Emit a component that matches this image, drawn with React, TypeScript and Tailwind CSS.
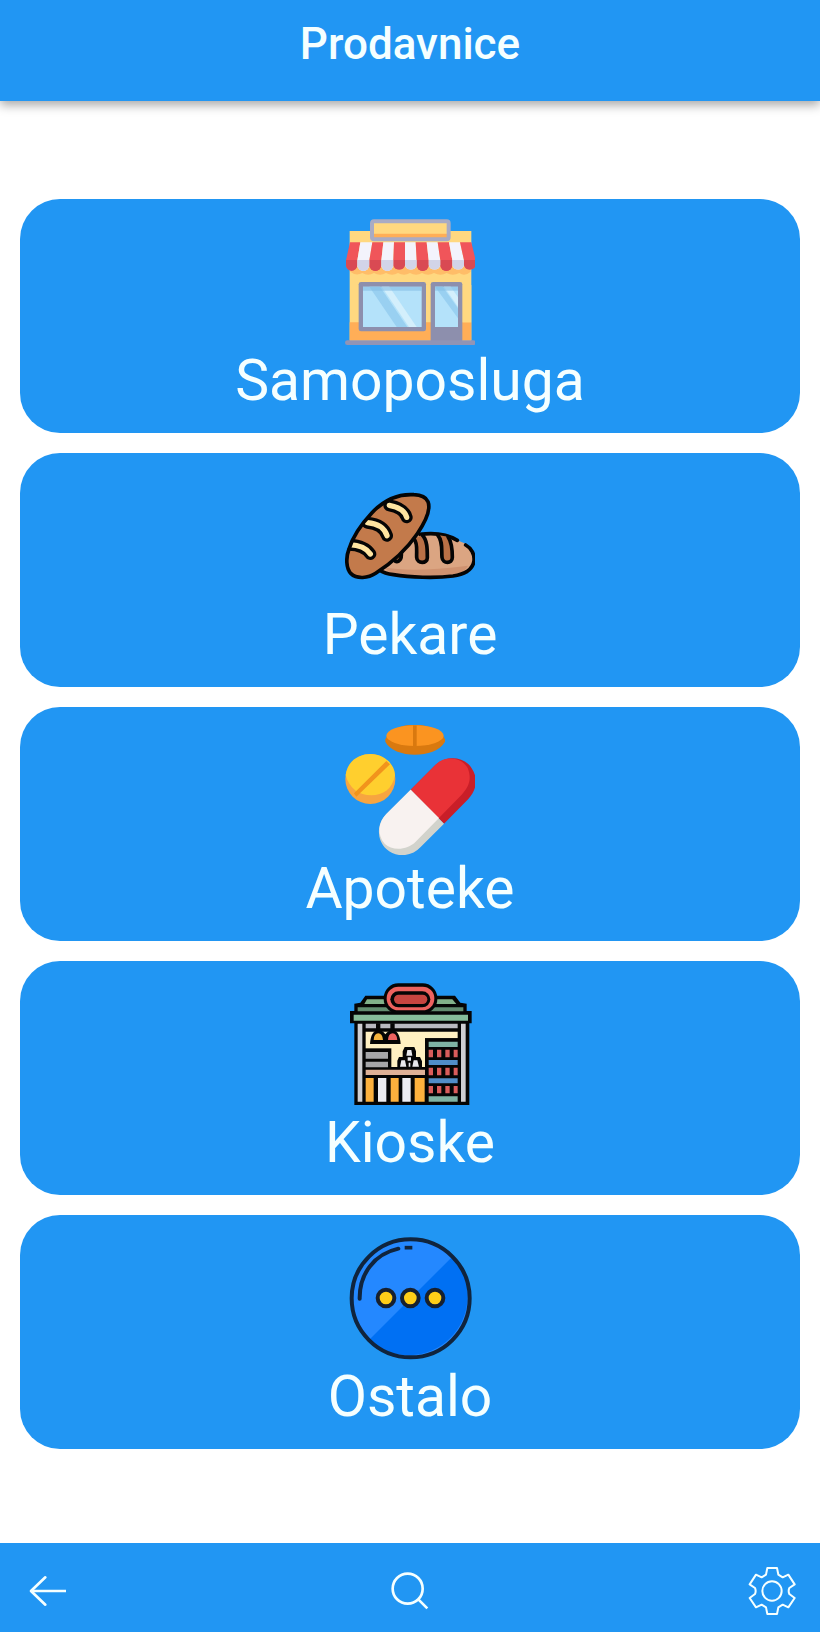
import type { ReactNode } from 'react';

const StoreIcon = () => (
  <svg viewBox="45 36 390 390" className="size-[130px]" aria-hidden="true">
    <rect x="59" y="78" width="365" height="330" fill="#ffd880" />
    <path d="M59 352H424V406H59z" fill="#ffae57" />
    <path d="M397 240H424V352H397z" fill="#ffd880" />
    <rect x="126" y="49" width="230" height="54" rx="6" fill="#ffd880" />
    <path d="M130 86H352V100H130z" fill="#ffae57" />
    <rect x="126" y="49" width="230" height="54" rx="6" fill="none" stroke="#a9abc4" strokeWidth="12" />
    {/* shade under the awning */}
    <path d="M61 185H422V200Q404 216 388 204Q368 214 350 204Q332 214 312 204Q294 214 276 204Q258 214 240 204Q222 214 204 204Q186 214 168 204Q150 214 132 204Q114 214 97 204Q78 214 61 200z" fill="#ffbd68" />
    <path d="M60 112H91L82 166V180A17 17 0 0 1 48 180V166z" fill="#f0555a" />
    <path d="M91 112H127L118 166V180A18 18 0 0 1 82 180V166z" fill="#f3f3fc" />
    <path d="M127 112H160L154 166V180A18 18 0 0 1 118 180V166z" fill="#f0555a" />
    <path d="M160 112H192L190 166V180A18 18 0 0 1 154 180V166z" fill="#f3f3fc" />
    <path d="M192 112H225V180A18 18 0 0 1 190 180V166z" fill="#f0555a" />
    <path d="M225 112H257L260 166V180A18 18 0 0 1 225 180z" fill="#f3f3fc" />
    <path d="M257 112H290L296 166V180A18 18 0 0 1 260 180V166z" fill="#f0555a" />
    <path d="M290 112H323L331 166V180A18 18 0 0 1 296 180V166z" fill="#f3f3fc" />
    <path d="M323 112H357L367 166V180A18 18 0 0 1 331 180V166z" fill="#f0555a" />
    <path d="M357 112H390L402 166V180A18 18 0 0 1 367 180V166z" fill="#f3f3fc" />
    <path d="M390 112H424L437 166V180A18 18 0 0 1 402 180V166z" fill="#f0555a" />
    <g fill="#d94a53">
      <path d="M48 165H82V180A17 17 0 0 1 48 180z" />
      <path d="M118 165H154V180A18 18 0 0 1 118 180z" />
      <path d="M190 165H225V180A18 18 0 0 1 190 180z" />
      <path d="M260 165H296V180A18 18 0 0 1 260 180z" />
      <path d="M331 165H367V180A18 18 0 0 1 331 180z" />
      <path d="M402 165H437V180A18 18 0 0 1 402 180z" />
    </g>
    <g fill="#d2d4e8">
      <path d="M82 165H118V180A18 18 0 0 1 82 180z" />
      <path d="M154 165H190V180A18 18 0 0 1 154 180z" />
      <path d="M225 165H260V180A18 18 0 0 1 225 180z" />
      <path d="M296 165H331V180A18 18 0 0 1 296 180z" />
      <path d="M367 165H402V180A18 18 0 0 1 367 180z" />
    </g>
    <rect x="86" y="231" width="202" height="148" rx="7" fill="#8d8fad" />
    <rect x="99" y="245" width="176" height="121" fill="#b4e2fa" />
    <path d="M118 245H150L232 366H200z" fill="#99d0f1" />
    <path d="M155 245H178L260 366H237z" fill="#d3effc" />
    <path d="M99 245H275V257H99z" fill="#83bce4" opacity="0.6" />
    <path d="M302 408V238Q302 231 309 231H390Q397 231 397 238V408z" fill="#8d8fad" />
    <rect x="315" y="245" width="69" height="121" fill="#b4e2fa" />
    <path d="M315 245H338L384 310V340z" fill="#99d0f1" />
    <path d="M342 245H362L384 277V305z" fill="#d3effc" />
    <path d="M315 245H384V257H315z" fill="#83bce4" opacity="0.6" />
    <rect x="45" y="406" width="392" height="14" rx="7" fill="#9194b5" />
  </svg>
);

const loafShape =
  'M126 98C159 63 204 41 252 44Q285 45 294 65C304 91 285 127 262 161C230 208 186 248 137 280C115 295 80 298 63 281C48 265 47 233 57 207C68 170 96 130 126 98z';
const loafCuts = 'M178 76Q222 84 230 112M112 128Q160 132 171 167M58 194Q104 196 121 222';

const BreadIcon = () => (
  <svg viewBox="45 -27 390 390" className="size-[130px]" aria-hidden="true">
    <clipPath id="loaf">
      <path d={loafShape} />
    </clipPath>
    <g stroke="#050505" strokeWidth="11" strokeLinecap="round" strokeLinejoin="round">
      <path d="M270 163C310 157 351 162 382 181L407 191C424 204 434 224 432 242C429 266 408 282 369 288C315 295 240 292 190 284Q164 281 148 270L213 190z" fill="#dba582" stroke="none" />
      <path d="M160 262Q250 278 414 257Q404 281 365 286C310 293 220 291 185 281z" fill="#cf9270" stroke="none" />
      <path d="M270 163C315 157 351 162 382 181M407 195C424 204 434 224 432 242C429 266 408 282 369 288C315 295 240 292 190 284Q164 281 148 270" fill="none" />
      <path d="M252 177C264 190 259 212 260 232C261 252 292 252 292 233C292 207 292 180 276 164" fill="#b97046" />
      <path d="M323 165C339 184 334 210 336 232C338 252 367 252 367 232C367 207 365 186 354 170" fill="#b97046" />
      <path d="M190 237C200 252 214 242 214 226V214" fill="#b97046" />
      <path d={loafShape} fill="#c37a4b" stroke="none" />
      <g clipPath="url(#loaf)" fill="none">
        <path d={loafCuts} strokeWidth="36" />
        <path d={loafCuts} stroke="#ffe5a1" strokeWidth="16" />
      </g>
      <path d={loafShape} fill="none" />
    </g>
  </svg>
);

const PillsIcon = () => (
  <svg viewBox="45 30 390 390" className="size-[130px]" aria-hidden="true">
    <path d="M166 73C178 42 217 29 255 29C295 29 334 45 345 73V80C329 108 291 119 255 119C216 119 178 105 166 80z" fill="#d9790f" />
    <ellipse cx="255" cy="62" rx="86" ry="31" fill="#fb9420" />
    <path d="M249 31H260V93H249z" fill="#d9790f" />
    <circle cx="121" cy="192" r="75" fill="#f7a540" />
    <path d="M47 180C52 138 86 117 122 117C160 117 194 145 195 181C187 224 159 240 124 241C87 241 57 220 47 180z" fill="#ffcf2e" />
    <path d="M72 235L169 138L180 148L79 245Q75 241 72 235z" fill="#f2941c" />
    <path d="M242 224L316 150C348 120 402 124 424 158C447 192 439 225 415 252L342 326z" fill="#c91e28" />
    <path d="M242 224L316 150C343 121 394 125 413 159C427 193 415 217 395 239L326 310z" fill="#e93237" />
    <path d="M242 224L342 326L272 396C246 425 198 430 169 402C139 374 140 327 168 298z" fill="#d2d3cc" />
    <path d="M242 224L327 309L257 380C231 406 187 408 164 386C140 359 145 321 169 297z" fill="#f8f2f0" />
  </svg>
);

const KioskIcon = () => (
  <svg viewBox="30 27 390 390" className="size-[130px]" aria-hidden="true">
    <path d="M58 155H403V405H58z" fill="#050505" />
    <path d="M91 77H360L376 98L395 101V123H410V160H45V123H58V101L76 98z" fill="#050505" />
    <path d="M96 88H352L364 102H88z" fill="#82b18a" />
    <path d="M68 112H385V124H68z" fill="#638d70" />
    <path d="M56 134H399V152H56z" fill="#86bd9a" />
    <rect x="146" y="40" width="161" height="91" rx="44" fill="#050505" />
    <rect x="155" y="50" width="143" height="71" rx="35" fill="#ed625f" />
    <rect x="166" y="64" width="120" height="48" rx="24" fill="#050505" />
    <rect x="177" y="74" width="100" height="28" rx="14" fill="#c84540" />
    <path d="M68 161H82V395H68zM378 161H392V395H378z" fill="#cfcfd2" />
    <path d="M92 161H368V175H92z" fill="#b9b9c0" />
    <path d="M92 185H368V205H270V291H92z" fill="#fff0c2" />
    <path d="M123 160H136V186H123zM166 160H179V186H166z" fill="#050505" />
    <path d="M105 222Q108 181 130 181Q143 181 151 193Q160 181 172 181Q194 182 197 222z" fill="#050505" />
    <path d="M116 210Q117 190 130 190Q142 190 144 210z" fill="#f5b43d" />
    <path d="M159 210Q160 190 173 190Q185 190 187 210z" fill="#ed625f" />
    <path d="M89 235H169V293H89z" fill="#050505" />
    <path d="M92 246H159V266H92zM92 275H159V292H92z" fill="#a6a6a8" />
    <path d="M187 292V272L192 261H203V244L209 231H238L243 244V261H255L261 274V292z" fill="#050505" />
    <path d="M217 240H229L232 257H214zM199 271H210L214 290H195zM236 271H247L252 290H232zM218 262H228V272H218zM221 278H226V290H221z" fill="#e8e8ed" />
    <path d="M92 299H270V315H92z" fill="#dfb196" />
    <path d="M92 324H116V395H92zM167 324H191V395H167zM239 324H269V395H239z" fill="#fdb13d" />
    <path d="M129 324H154V395H129zM202 324H227V395H202z" fill="#ededf2" />
    <path d="M270 205H369V400H270z" fill="#050505" />
    <path d="M281 215H368V231H281zM281 379H368V395H281z" fill="#7fb3a3" />
    <path d="M281 270H368V285H281zM281 325H368V340H281z" fill="#508dc8" />
    <path d="M281 239H294V262H281zM306 239H319V262H306zM331 239H344V262H331zM356 239H368V262H356zM281 293H294V316H281zM306 293H319V316H306zM331 293H344V316H331zM356 293H368V316H356zM281 348H294V370H281zM306 348H319V370H306zM331 348H344V370H331zM356 348H368V370H356z" fill="#d95c5b" />
  </svg>
);

const OtherIcon = () => (
  <svg viewBox="30 24 390 390" className="size-[130px]" aria-hidden="true">
    <circle cx="227" cy="220" r="177" fill="#2488ff" />
    <path d="M352 95A177 177 0 0 1 102 345z" fill="#0070f3" />
    <circle cx="227" cy="220" r="177" fill="none" stroke="#10243d" strokeWidth="12" />
    <path d="M74 221C73 145 119 87 190 71" fill="none" stroke="#10243d" strokeWidth="12" strokeLinecap="round" />
    <path d="M209 68H232" stroke="#10243d" strokeWidth="11" />
    <g fill="#ffce18" stroke="#17202e" strokeWidth="12">
      <circle cx="153" cy="219" r="25" />
      <circle cx="226" cy="219" r="25" />
      <circle cx="300" cy="219" r="25" />
    </g>
  </svg>
);

interface Category {
  name: string;
  icon: ReactNode;
}

const categories: Category[] = [
  { name: 'Samoposluga', icon: <StoreIcon /> },
  { name: 'Pekare', icon: <BreadIcon /> },
  { name: 'Apoteke', icon: <PillsIcon /> },
  { name: 'Kioske', icon: <KioskIcon /> },
  { name: 'Ostalo', icon: <OtherIcon /> },
];

const BottomBar = () => (
  <nav className="flex items-center justify-between bg-[#2196f3] px-6 pt-6 pb-[17px] text-[#f5ffff]">
    <button type="button" aria-label="Nazad">
      <svg viewBox="0 0 144 144" className="size-12" fill="none" stroke="currentColor" strokeWidth="8">
        <path d="M21 72H126" />
        <path d="M64 31L21 72L64 113" strokeLinecap="round" strokeLinejoin="round" />
      </svg>
    </button>
    <button type="button" aria-label="Pretraga">
      <svg viewBox="0 0 144 144" className="size-12" fill="none" stroke="currentColor" strokeWidth="8">
        <circle cx="65" cy="65" r="45" />
        <path d="M97 97L124 124" />
      </svg>
    </button>
    <button type="button" aria-label="Podešavanja">
      <svg viewBox="0 0 144 144" className="size-12" fill="none" stroke="currentColor" strokeWidth="6" strokeLinejoin="round">
        <path d="M58 3H87L91 23L104 31L121 23L140 52L124 63Q120 72 124 81L140 93L121 121L104 113L91 121L87 141H58L54 121L41 113L24 121L5 93L21 81Q25 72 21 63L5 52L24 23L41 31L54 23z" />
        <circle cx="72" cy="72" r="29" />
      </svg>
    </button>
  </nav>
);

const App = () => {
  return (
    <div className="flex min-h-screen flex-col bg-white font-[Roboto,sans-serif]">
      <header className="relative bg-[#2196f3] pt-[18px] pb-[31px] text-center shadow-[0_4px_10px_rgba(0,0,0,0.35)]">
        <h1 className="text-[44px] leading-[52px] font-medium text-[#f5ffff]">Prodavnice</h1>
      </header>

      <main className="flex flex-1 flex-col gap-5 px-5 pt-[98px] pb-[94px]">
        {categories.map((category) => (
          <button
            key={category.name}
            type="button"
            className="flex flex-col items-center rounded-[40px] bg-[#2196f3] py-[18px]"
          >
            {category.icon}
            <span className="text-[57px] leading-[68px] text-[#f5ffff]">{category.name}</span>
          </button>
        ))}
      </main>

      <BottomBar />
    </div>
  );
};

export default App;
